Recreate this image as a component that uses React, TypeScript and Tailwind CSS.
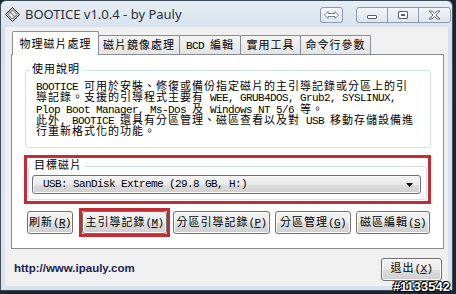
import { ReactNode } from "react";

// ascii runs get a narrower mono size so half-width chars come out at 6px,
// cjk runs are drawn a bit smaller but keep a 12px advance
function Mixed({ text }: { text: string }) {
  const parts = text.match(/[\x20-\x7e]+|[^\x20-\x7e]+/g) ?? [];
  return (
    <>
      {parts.map((p, i) =>
        /^[\x20-\x7e]/.test(p) ? (
          <span key={i} className="text-[11px] tracking-[-0.6px]">
            {p}
          </span>
        ) : (
          <span key={i} className="text-[11px] tracking-[1px]">
            {p}
          </span>
        )
      )}
    </>
  );
}

function Label({ text, k }: { text: string; k: string }) {
  return (
    <span className="whitespace-pre">
      <Mixed text={text} />
      <span className="text-[11px] tracking-[-0.6px]">
        (<u className="underline-offset-1">{k}</u>)
      </span>
    </span>
  );
}

function Btn({ className, children }: { className: string; children: ReactNode }) {
  return (
    <div
      className={
        "h-[23px] flex items-center justify-center rounded-[3px] border border-[#707070] bg-[linear-gradient(#f2f2f2_0%,#ebebeb_50%,#dddddd_50%,#cfcfcf_100%)] shadow-[inset_0_0_0_1px_#fbfbfb] leading-[14px] " +
        className
      }
    >
      {children}
    </div>
  );
}

function Tab({ text, w, selected }: { text: string; w: string; selected?: boolean }) {
  if (selected) {
    return (
      <div
        className={
          "relative z-10 h-[24px] -mb-px flex items-center justify-center pt-[2px] border border-b-0 border-[#898c95] bg-white rounded-t-[2px] whitespace-pre leading-[14px] " +
          w
        }
      >
        <Mixed text={text} />
      </div>
    );
  }
  return (
    <div
      className={
        "h-[19px] -ml-px flex items-center justify-center pt-[1px] border border-b-0 border-[#898c95] bg-[linear-gradient(#f4f4f4,#e4e4e4)] rounded-t-[2px] whitespace-pre leading-[14px] " +
        w
      }
    >
      <Mixed text={text} />
    </div>
  );
}

function TitleBar() {
  return (
    <div className="h-[26px] flex items-center pl-[4px] pr-[1px]">
      <svg width="15" height="15" viewBox="0 0 15 15">
        <path d="M7.5 0.5L14.5 7.5L7.5 14.5L0.5 7.5Z" fill="#d8d8d8" stroke="#222" />
        <path d="M7.5 3L12 7.5L7.5 12L3 7.5Z" fill="#fff" stroke="#444" />
        <path d="M5 5.5L9.5 10M5.5 5L10 9.5" stroke="#555" strokeWidth="0.8" />
      </svg>
      <span className="ml-[5px] font-['Noto_Sans',sans-serif] text-[13px] text-[#2a2f36] leading-none">
        BOOTICE v1.0.4 - by Pauly
      </span>
      <div className="ml-auto self-start mt-[6px] flex">
        <div className="w-[23px] h-[16px] mr-[13px] rounded-[3px] border border-[#8c9aab] bg-[linear-gradient(#f3f6fa,#dde5ee)] flex items-center justify-center">
          <svg width="15" height="8" viewBox="0 0 15 8">
            <path
              d="M0.5 4L4 0.5V2.5H11V0.5L14.5 4L11 7.5V5.5H4V7.5Z"
              fill="#fafcfe"
              stroke="#6b7888"
              strokeWidth="0.9"
            />
          </svg>
        </div>
        <div className="flex h-[16px] rounded-[3px] border border-[#8c9aab] bg-[linear-gradient(#f3f6fa,#dde5ee)]">
          <div className="w-[31px] flex items-end justify-center pb-[3px] border-r border-[#8c9aab]">
            <div className="w-[10px] h-[4px] rounded-[1px] border border-[#56606d] bg-white" />
          </div>
          <div className="w-[31px] flex items-center justify-center border-r border-[#8c9aab]">
            <div className="w-[10px] h-[8px] rounded-[1px] border border-[#56606d] bg-white flex items-center justify-center">
              <div className="w-[4px] h-[2px] border border-[#56606d]" />
            </div>
          </div>
          <div className="w-[31px] flex items-center justify-center">
            <svg width="13" height="10" viewBox="0 0 13 10">
              <path
                d="M1 1H4L6.5 3.5L9 1H12L8 5L12 9H9L6.5 6.5L4 9H1L5 5Z"
                fill="#fff"
                stroke="#56606d"
                strokeWidth="0.9"
                strokeLinejoin="round"
              />
            </svg>
          </div>
        </div>
      </div>
    </div>
  );
}

const help = [
  "BOOTICE 可用於安裝、修復或備份指定磁片的主引導記錄或分區上的引",
  "導記錄。支援的引導程式主要有 WEE, GRUB4DOS, Grub2, SYSLINUX,",
  "Plop Boot Manager, Ms-Dos 及 Windows NT 5/6 等。",
  "此外, BOOTICE 還具有分區管理、磁區查看以及對 USB 移動存儲設備進",
  "行重新格式化的功能。",
];

export default function App() {
  return (
    <div className="relative w-[456px] h-[294px] overflow-hidden bg-[#1b2530] font-['Liberation_Mono','Noto_Sans_CJK_TC',monospace] text-[12px] text-black">
      <div className="w-[453px] h-[291px] flex flex-col border border-[#3e4b59] rounded-t-[6px] bg-[linear-gradient(#e7eef5,#d7e1ec_30px,#dae3ed)]">
        <TitleBar />
        <div className="flex-1 mx-[4px] mb-[4px] bg-[#f0f0f0] flex flex-col">
          <div className="mt-[4px] ml-[7px] h-[23px] flex items-end">
            <Tab text="物理磁片處理" w="w-[87px]" selected />
            <Tab text="磁片鏡像處理" w="w-[82px]" />
            <Tab text="BCD 編輯" w="w-[62px]" />
            <Tab text="實用工具" w="w-[61px]" />
            <Tab text="命令行參數" w="w-[71px]" />
          </div>
          <div className="ml-[6px] w-[433px] h-[195px] border border-[#898c95] bg-white flex flex-col">
            <fieldset className="mt-[8px] ml-[13px] w-[406px] border border-[#d5dfe5] rounded-[3px]">
              <legend className="ml-[4px] px-[2px] leading-[14px]">
                <Mixed text="使用說明" />
              </legend>
              <div className="pl-[10px] pt-[5px] pb-[9px] whitespace-pre">
                {help.map((l) => (
                  <div key={l} className="h-[11.25px] leading-[11px]">
                    <Mixed text={l} />
                  </div>
                ))}
              </div>
            </fieldset>
            <div className="mt-[7px] ml-[12px] w-[407px] h-[49px] border-[3px] border-[#c42b32]">
              <fieldset className="mt-[1px] mx-[1px] border border-[#d5dfe5] rounded-[3px] pb-[5px]">
                <legend className="ml-[3px] px-[2px] leading-[14px]">
                  <Mixed text="目標磁片" />
                </legend>
                <div className="mt-[2px] ml-[3px] w-[389px] h-[19px] flex items-center pl-[10px] pr-[7px] rounded-[3px] border border-[#707070] bg-[linear-gradient(#f2f2f2_0%,#ebebeb_50%,#dddddd_50%,#cfcfcf_100%)] shadow-[inset_0_0_0_1px_#fbfbfb]">
                  <span className="text-[11px] tracking-[-0.6px] whitespace-pre leading-none">
                    USB: SanDisk Extreme (29.8 GB, H:)
                  </span>
                  <svg className="ml-auto" width="7" height="4" viewBox="0 0 7 4">
                    <path d="M0 0H7L3.5 4Z" fill="#111" />
                  </svg>
                </div>
              </fieldset>
            </div>
            <div className="mt-[4px] ml-[15px] h-[29px] flex items-center">
              <Btn className="w-[46px]">
                <Label text="刷新" k="R" />
              </Btn>
              <div className="ml-[6px] border-[3px] border-[#c42b32]">
                <Btn className="w-[85px]">
                  <Label text="主引導記錄" k="M" />
                </Btn>
              </div>
              <Btn className="ml-[3px] w-[97px]">
                <Label text="分區引導記錄" k="P" />
              </Btn>
              <Btn className="ml-[5px] w-[76px]">
                <Label text="分區管理" k="G" />
              </Btn>
              <Btn className="ml-[5px] w-[74px]">
                <Label text="磁區編輯" k="S" />
              </Btn>
            </div>
          </div>
          <div className="mt-[9px] pl-[9px] pr-[6px] h-[22px] flex items-center justify-between">
            <span className="font-['Liberation_Sans',Arial,sans-serif] font-bold text-[11.5px] text-[#1c2456]">
              http://www.ipauly.com
            </span>
            <Btn className="w-[61px] h-[22px]">
              <Label text="退出" k="X" />
            </Btn>
          </div>
        </div>
      </div>
      <div className="absolute right-[6px] top-[280px] font-['Liberation_Sans',Arial,sans-serif] font-bold text-[13px] leading-none text-white [text-shadow:-1px_0_#000,1px_0_#000,0_1px_#000,0_-1px_#000,1px_1px_#000,-1px_-1px_#000]">
        #1133542
      </div>
    </div>
  );
}
